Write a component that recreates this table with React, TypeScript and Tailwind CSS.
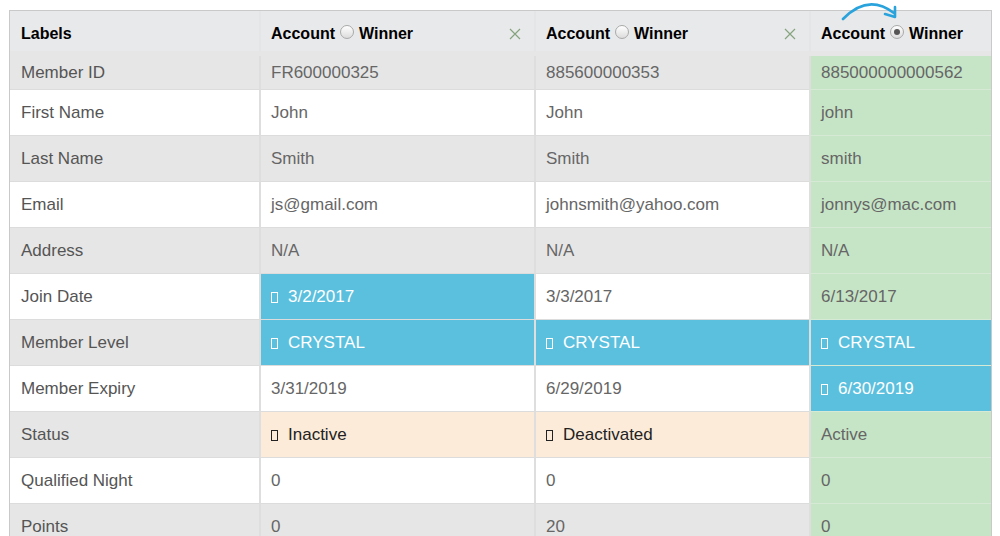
import React from "react";

type Cell = { text: string; kind?: "blue" | "status" };

const rows: { label: string; cells: Cell[] }[] = [
  { label: "Member ID", cells: [{ text: "FR600000325" }, { text: "885600000353" }, { text: "885000000000562" }] },
  { label: "First Name", cells: [{ text: "John" }, { text: "John" }, { text: "john" }] },
  { label: "Last Name", cells: [{ text: "Smith" }, { text: "Smith" }, { text: "smith" }] },
  { label: "Email", cells: [{ text: "js@gmail.com" }, { text: "johnsmith@yahoo.com" }, { text: "jonnys@mac.com" }] },
  { label: "Address", cells: [{ text: "N/A" }, { text: "N/A" }, { text: "N/A" }] },
  { label: "Join Date", cells: [{ text: "3/2/2017", kind: "blue" }, { text: "3/3/2017" }, { text: "6/13/2017" }] },
  {
    label: "Member Level",
    cells: [
      { text: "CRYSTAL", kind: "blue" },
      { text: "CRYSTAL", kind: "blue" },
      { text: "CRYSTAL", kind: "blue" },
    ],
  },
  { label: "Member Expiry", cells: [{ text: "3/31/2019" }, { text: "6/29/2019" }, { text: "6/30/2019", kind: "blue" }] },
  { label: "Status", cells: [{ text: "Inactive", kind: "status" }, { text: "Deactivated", kind: "status" }, { text: "Active" }] },
  { label: "Qualified Night", cells: [{ text: "0" }, { text: "0" }, { text: "0" }] },
  { label: "Points", cells: [{ text: "0" }, { text: "20" }, { text: "0" }] },
];

const widths = ["w-[275px]", "w-[275px]", "w-[182px]"];

function Tofu() {
  return <span className="inline-block w-[7px] h-[11px] border border-current mr-[10px] translate-y-[1px]" />;
}

function Radio({ checked }: { checked?: boolean }) {
  return (
    <span className="inline-flex items-center justify-center w-[14px] h-[14px] rounded-full border border-[#a9a9a9] bg-gradient-to-b from-white to-[#dcdcdc] mx-[5px] -translate-y-[2px]">
      {checked && <span className="w-[6px] h-[6px] rounded-full bg-[#555]" />}
    </span>
  );
}

function XIcon() {
  return (
    <svg width="12" height="12" viewBox="0 0 12 12" className="text-[#86a37f]">
      <path d="M1 1 L11 11 M11 1 L1 11" stroke="currentColor" strokeWidth="1.2" fill="none" />
    </svg>
  );
}

function HeaderCell({ checked, x, w }: { checked?: boolean; x?: boolean; w: string }) {
  return (
    <div className={`${w} h-full flex items-center justify-between pt-[5px] pl-[10px] pr-[13px] border-l-2 border-[#e4e5e6]`}>
      <div className="flex items-center font-bold text-[16px] text-black">
        <span>Account</span>
        <Radio checked={checked} />
        <span>Winner</span>
      </div>
      {x && <XIcon />}
    </div>
  );
}

export default function App() {
  return (
    <div className="w-[1000px] h-[536px] overflow-hidden bg-white pl-[9px] pt-[10px]" style={{ fontFamily: '"Liberation Sans", Arial, sans-serif' }}>
      <div className="w-[983px] border-l border-t border-r border-[#c9c9c9] bg-[#f4f4f4]">
        {/* header */}
        <div className="relative flex h-[40px] bg-[#e8e9ea]">
          <div className="w-[249px] h-full flex items-center pt-[5px] pl-[11px] font-bold text-[16px] text-black">
            Labels
          </div>
          <HeaderCell w={widths[0]} x />
          <HeaderCell w={widths[1]} x />
          <HeaderCell w={widths[2]} checked />
          <svg className="absolute left-[826px] -top-[10px]" width="62" height="30" viewBox="0 0 62 30">
            <path d="M7 18 Q32 -8 58 12" stroke="#2aa3dc" strokeWidth="2.6" fill="none" strokeLinecap="round" />
            <path d="M49 13 L59 16 L59 6" stroke="#2aa3dc" strokeWidth="2.6" fill="none" strokeLinecap="round" strokeLinejoin="round" />
          </svg>
        </div>
        {rows.map((r, i) => {
          const gray = i % 2 === 0;
          const h = i === 0 ? "h-[39px] pt-[5px]" : "h-[46px]";
          return (
            <div key={r.label} className={`flex ${h} text-[17px] ${gray ? "bg-[#e6e6e6]" : "bg-white"}`}>
              <div
                className={`w-[249px] flex items-center pl-[11px] text-[#555] border-b border-[#dcdcdc] ${gray ? "bg-[#e6e6e6]" : "bg-white"}`}
              >
                {r.label}
              </div>
              {r.cells.map((c, j) => {
                const green = j === 2;
                let bg = green ? "bg-[#c6e5c6]" : gray ? "bg-[#e6e6e6]" : "bg-white";
                let color = "text-[#666]";
                if (c.kind === "blue") {
                  bg = "bg-[#5bc0de]";
                  color = "text-white";
                } else if (c.kind === "status") {
                  bg = "bg-[#fcebd9]";
                  color = "text-[#222]";
                }
                const sep = green ? "border-[#d5e9d5]" : "border-[#dcdcdc]";
                return (
                  <div
                    key={j}
                    className={`${widths[j]} flex items-center pl-[10px] border-b ${sep} ${bg} ${color} border-l-2 border-l-[#dedede]`}
                  >
                    {c.kind && <Tofu />}
                    {c.text}
                  </div>
                );
              })}
            </div>
          );
        })}
      </div>
    </div>
  );
}
